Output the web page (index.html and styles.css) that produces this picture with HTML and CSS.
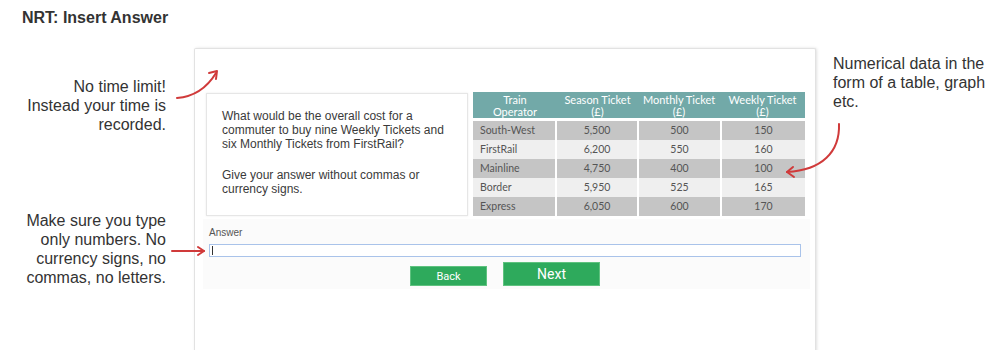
FILE: index.html
```html
<!DOCTYPE html>
<html>
<head>
<meta charset="utf-8">
<link rel="stylesheet" href="styles.css">
</head>
<body>
<h1 class="title">NRT: Insert Answer</h1>
<div class="stage">
  <div class="notes-left">
    <p class="note note-time">No time limit!<br>Instead your time is<br>recorded.</p>
    <p class="note note-type">Make sure you type<br>only numbers. No<br>currency signs, no<br>commas, no letters.</p>
  </div>
  <div class="panel">
    <div class="content">
      <div class="question">
        <p>What would be the overall cost for a commuter to buy nine Weekly Tickets and six Monthly Tickets from FirstRail?</p>
        <p>Give your answer without commas or currency signs.</p>
      </div>
      <div class="data">
        <div class="thead">
          <div>Train<br>Operator</div>
          <div>Season Ticket<br>(£)</div>
          <div>Monthly Ticket<br>(£)</div>
          <div>Weekly Ticket<br>(£)</div>
        </div>
        <div class="tbody">
          <div class="row dark"><span class="op">South-West</span><span>5,500</span><span>500</span><span>150</span></div>
          <div class="row light"><span class="op">FirstRail</span><span>6,200</span><span>550</span><span>160</span></div>
          <div class="row dark"><span class="op">Mainline</span><span>4,750</span><span>400</span><span>100</span></div>
          <div class="row light"><span class="op">Border</span><span>5,950</span><span>525</span><span>165</span></div>
          <div class="row dark"><span class="op">Express</span><span>6,050</span><span>600</span><span>170</span></div>
        </div>
      </div>
    </div>
    <div class="form">
      <label class="label">Answer</label>
      <div class="input"><span class="caret"></span></div>
      <div class="buttons">
        <button class="btn back">Back</button>
        <button class="btn next">Next</button>
      </div>
    </div>
  </div>
  <div class="notes-right">
    <p class="note note-data">Numerical data in the<br>form of a table, graph<br>etc.</p>
  </div>
</div>
<svg class="arrows" width="1000" height="350" viewBox="0 0 1000 350">
  <g fill="none" stroke="#d03a3a" stroke-width="2" stroke-linecap="round" stroke-linejoin="round">
    <path d="M177 98 Q202 96 216 73"/>
    <path d="M209 73 L217 71 L216 79"/>
    <path d="M172 251 L204 251"/>
    <path d="M198 247 L204 251 L198 255"/>
    <path d="M839 124 C840 152 822 170 787 172"/>
    <path d="M793 167 L787 172 L794 177"/>
  </g>
</svg>
</body>
</html>
```
FILE: styles.css
```css
html, body {
  margin: 0;
  padding: 0;
  background: #fff;
  width: 1000px;
  height: 350px;
  overflow: hidden;
  font-family: "Liberation Sans", Arial, sans-serif;
  color: #333;
}
.title {
  margin: 0;
  padding: 8px 0 0 22px;
  font-size: 16px;
  line-height: 19px;
  font-weight: bold;
  color: #333;
}
.stage {
  display: flex;
  align-items: flex-start;
  margin-top: 21px;
}
.notes-left {
  width: 166px;
  flex: none;
  display: flex;
  flex-direction: column;
}
.note {
  margin: 0;
  font-size: 16px;
  line-height: 19px;
  color: #333;
}
.notes-left .note { text-align: right; }
.note-time { margin-top: 29px; }
.note-type { margin-top: 77px; }
.notes-right {
  flex: none;
  margin-left: 17px;
}
.note-data { margin-top: 6px; }
.panel {
  flex: none;
  margin-left: 28px;
  width: 622px;
  height: 310px;
  border: 1px solid #e2e2e2;
  border-bottom: none;
  border-radius: 2px 2px 0 0;
  box-shadow: 1px 0 3px rgba(0,0,0,0.12);
  background: #fff;
  padding: 44px 0 0 11px;
  box-sizing: border-box;
}
.content {
  display: flex;
  gap: 5px;
  align-items: flex-start;
}
.question {
  width: 262px;
  height: 123px;
  box-sizing: border-box;
  border: 1px solid #e6e6e6;
  box-shadow: 0 0 2px rgba(0,0,0,0.08);
  padding: 15px 10px 0 15px;
  font-size: 12px;
  line-height: 14px;
  color: #3a3a3a;
}
.question p { margin: 0 0 17px; }
.data {
  width: 332px;
  margin-top: -1px;
  font-family: Lato, "Open Sans", sans-serif;
  font-size: 10px;
}
.thead {
  display: grid;
  grid-template-columns: 84px 81px 82px 85px;
  background: #72a9a8;
  color: #fff;
  height: 26px;
  text-align: center;
  line-height: 12px;
  padding-top: 2px;
  box-sizing: border-box;
  font-size: 11px;
}
.tbody {
  margin-top: 3px;
  display: flex;
  flex-direction: column;
}
.row {
  display: grid;
  grid-template-columns: 82px 80px 81px 83px;
  column-gap: 2px;
  height: 19px;
  line-height: 19px;
  color: #555;
  font-size: 10.5px;
}
.row span { text-align: center; }
.row span.op { text-align: left; padding-left: 7px; }
.row.dark span { background: #c5c5c5; }
.row.light span { background: #efefef; }
.form {
  margin: 3px 0 0 -3px;
  width: 607px;
  height: 70px;
  background: #fbfbfb;
  padding: 8px 0 0 6px;
  box-sizing: border-box;
}
.label {
  display: block;
  font-size: 10px;
  line-height: 12px;
  color: #555;
}
.input {
  margin-top: 5px;
  width: 592px;
  height: 13px;
  box-sizing: border-box;
  border: 1px solid #a9c3ea;
  background: #fff;
  padding: 1px 0 0 2px;
}
.caret {
  display: block;
  width: 1px;
  height: 9px;
  background: #333;
}
.buttons {
  display: flex;
  align-items: flex-end;
  gap: 16px;
  margin: 5px 0 0 201px;
}
.btn {
  border: 1px solid #5fc27f;
  background: #2eaa5c;
  color: #fff;
  font-family: Roboto, "Liberation Sans", sans-serif;
  padding: 0;
  cursor: pointer;
}
.btn.back {
  width: 77px;
  height: 20px;
  font-size: 11px;
}
.btn.next {
  width: 97px;
  height: 24px;
  font-size: 14px;
}
.arrows {
  position: absolute;
  top: 0;
  left: 0;
  pointer-events: none;
}
```
